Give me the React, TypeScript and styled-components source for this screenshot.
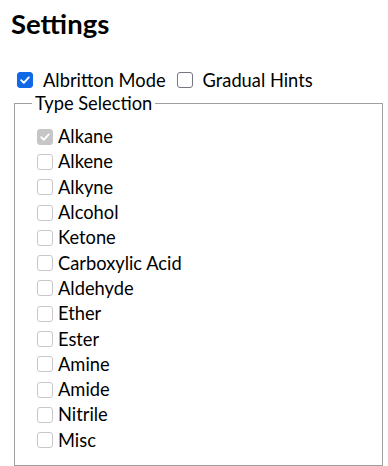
import React, { useState } from 'react';
import styled, { createGlobalStyle } from 'styled-components';

const GlobalStyle = createGlobalStyle`
  body {
    margin: 0;
    background: #fff;
    color: #000;
    font-family: Lato, 'Open Sans', sans-serif;
  }
`;

const TYPES = [
  'Alkane',
  'Alkene',
  'Alkyne',
  'Alcohol',
  'Ketone',
  'Carboxylic Acid',
  'Aldehyde',
  'Ether',
  'Ester',
  'Amine',
  'Amide',
  'Nitrile',
  'Misc',
];

type BoxProps = { $checked: boolean; $disabled?: boolean };

// 체크박스 하나
const CheckBox = ({
  checked,
  disabled,
  onChange,
}: {
  checked: boolean;
  disabled?: boolean;
  onChange?: () => void;
}) => (
  <Box $checked={checked} $disabled={disabled}>
    <HiddenInput type="checkbox" checked={checked} disabled={disabled} onChange={onChange} />
    {checked && (
      <svg width="12" height="12" viewBox="0 0 12 12">
        <path d="M2.2 6.2 L4.8 8.8 L9.8 3.4" fill="none" stroke="#fff" strokeWidth="1.9" strokeLinecap="round" strokeLinejoin="round" />
      </svg>
    )}
  </Box>
);

const App = () => {
  const [albritton, setAlbritton] = useState(true);
  const [hints, setHints] = useState(false);
  const [selected, setSelected] = useState<string[]>(['Alkane']);

  // 종류 체크 토글
  const toggleType = (t: string) => {
    setSelected((prev) => (prev.includes(t) ? prev.filter((p) => p !== t) : [...prev, t]));
  };

  return (
    <Page>
      <GlobalStyle />
      <Title>Settings</Title>
      <OptionRow>
        <Option>
          <CheckBox checked={albritton} onChange={() => setAlbritton(!albritton)} />
          <span>Albritton Mode</span>
        </Option>
        <Option>
          <CheckBox checked={hints} onChange={() => setHints(!hints)} />
          <span>Gradual Hints</span>
        </Option>
      </OptionRow>
      <TypeBox>
        <Legend>Type Selection</Legend>
        <TypeList>
          {TYPES.map((t) => (
            <TypeItem key={t}>
              <CheckBox checked={selected.includes(t)} disabled={albritton} onChange={() => toggleType(t)} />
              <span>{t}</span>
            </TypeItem>
          ))}
        </TypeList>
      </TypeBox>
    </Page>
  );
};

export default App;

const Page = styled.div`
  padding: 6px 6px 0 11px;
  font-size: 18.3px;
`;

const Title = styled.h2`
  margin: 0;
  font-size: 27.5px;
  line-height: 36px;
  font-weight: 700;
`;

const OptionRow = styled.div`
  display: flex;
  align-items: center;
  gap: 11px;
  height: 22px;
  margin-top: 27px;
  padding-left: 6px;
`;

const Option = styled.label`
  display: flex;
  align-items: center;
  gap: 10px;
  line-height: 22px;
`;

const Box = styled.span<BoxProps>`
  position: relative;
  flex: none;
  display: flex;
  align-items: center;
  justify-content: center;
  width: 16px;
  height: 16px;
  box-sizing: border-box;
  border-radius: 3px;
  border: 1.5px solid
    ${({ $checked, $disabled }) => ($disabled ? ($checked ? '#c6c6c6' : '#c8c8cc') : $checked ? '#1069e6' : '#767680')};
  background: ${({ $checked, $disabled }) => ($checked ? ($disabled ? '#c6c6c6' : '#1069e6') : '#fff')};
`;

const HiddenInput = styled.input`
  position: absolute;
  inset: 0;
  margin: 0;
  opacity: 0;
`;

const TypeBox = styled.fieldset`
  margin: 1px 0 0 3px;
  padding: 9px 10px 12px 17px;
  border: 1px solid #a0a0a0;
  width: 369px;
  box-sizing: border-box;
`;

const Legend = styled.legend`
  padding: 0 3px;
  line-height: 23px;
`;

const TypeList = styled.div`
  display: flex;
  flex-direction: column;
  padding-left: 5px;
`;

const TypeItem = styled.label`
  display: flex;
  align-items: center;
  gap: 5px;
  height: 25.3px;
  line-height: 25px;
`;
